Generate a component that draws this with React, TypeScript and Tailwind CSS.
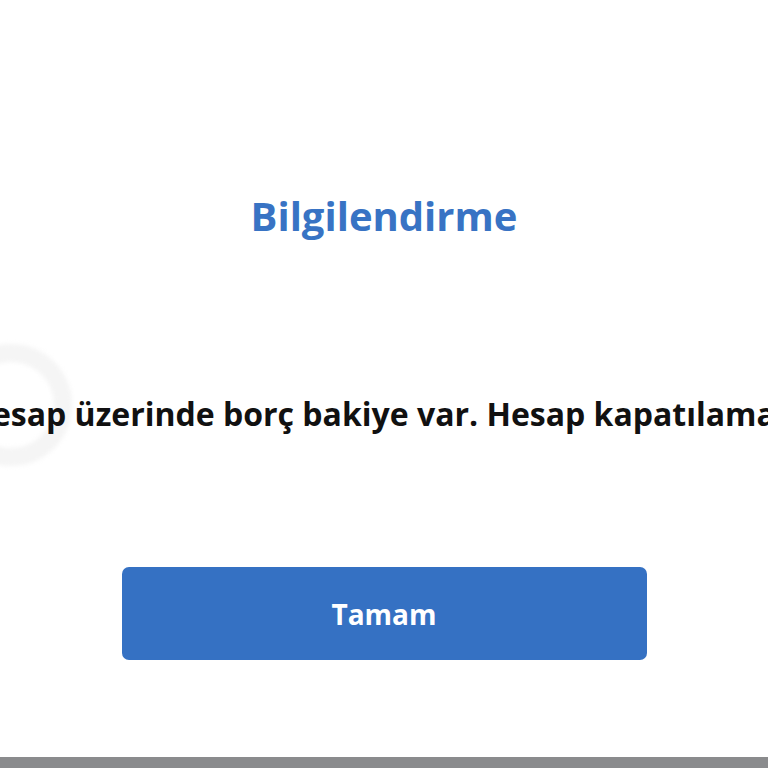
export default function App() {
  return (
    <div className="relative flex h-[768px] w-full flex-col overflow-hidden bg-white font-['Open_Sans',sans-serif]">
      {/* faint ring behind the message */}
      <div className="absolute left-[-50px] top-[344px] h-[122px] w-[122px] rounded-full border-[18px] border-[#f5f5f5] blur-[2px]" />

      <div className="relative flex flex-1 flex-col items-center">
        <h1 className="mt-[188px] text-[40px] font-bold leading-[56px] text-[#3873c4]">
          Bilgilendirme
        </h1>
        <p className="mt-[148px] whitespace-nowrap text-[32px] font-bold leading-[44px] text-[#111]">
          Hesap üzerinde borç bakiye var. Hesap kapatılamaz.
        </p>
        <button className="mt-[131px] h-[93px] w-[525px] shrink-0 rounded-[7px] bg-[#3571c3] text-[28px] font-bold text-white">
          Tamam
        </button>
      </div>

      <div className="h-[11px] w-full bg-[#8a8b8d]" />
    </div>
  )
}
